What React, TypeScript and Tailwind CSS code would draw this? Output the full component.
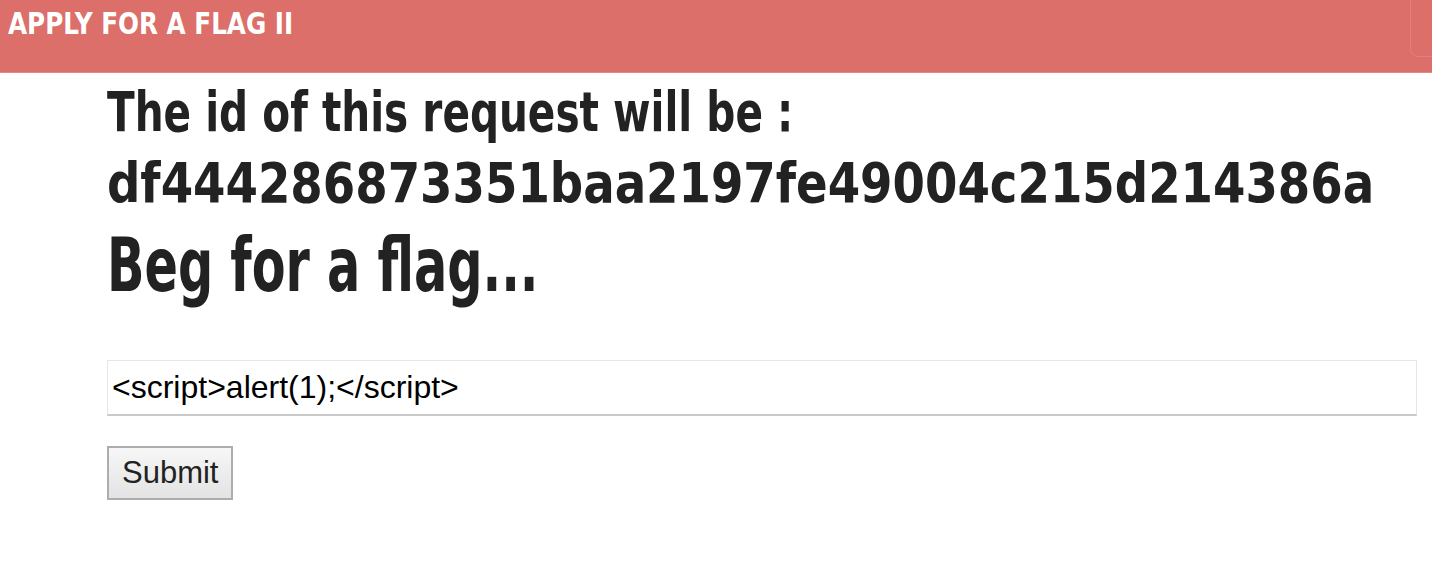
import React from "react";

// no narrow gothic face is installed, so DejaVu Sans Condensed is squeezed horizontally
const gothic = {
  fontFamily: '"DejaVu Sans Condensed", "DejaVu Sans", sans-serif',
};

const App = () => {
  return (
    <div className="min-h-[562px] w-full overflow-hidden bg-white">
      {/* Navbar */}
      <header className="relative h-[73px] overflow-hidden bg-[#dc6f69] border-b border-[#e48a84]">
        <div
          className="w-max origin-left scale-x-[0.885] pl-[9px] pt-[5px] text-[31px] font-bold leading-[36px] text-white"
          style={gothic}
        >
          APPLY FOR A FLAG II
        </div>
        <div className="absolute left-[1410px] top-[-20px] h-[77px] w-[60px] rounded-[8px] border border-[#e3827c]" />
      </header>

      {/* Content */}
      <main className="pl-[107px] pr-[15px]" style={gothic}>
        <h1 className="mt-[4px] text-[55px] font-bold leading-[71px] text-[#222]">
          <span className="block w-max origin-left scale-x-[0.82]">The id of this request will be :</span>
          <span className="block w-max origin-left scale-x-[0.942]">
            df444286873351baa2197fe49004c215d214386a
          </span>
        </h1>
        <h2 className="mt-[0px] w-max origin-left scale-x-[0.73] text-[75px] font-bold leading-[92px] text-[#222]">
          Beg for a flag...
        </h2>

        <form className="mt-[49px]" style={{ fontFamily: '"Liberation Sans", Arial, sans-serif' }}>
          <input
            type="text"
            defaultValue="<script>alert(1);</script>"
            className="block h-[56px] w-full border border-[#e6e6e6] border-b-2 border-b-[#c9c9c9] px-[4px] text-[32px] text-black outline-none"
          />
          <button
            type="button"
            className="mt-[30px] h-[54px] border-2 border-[#adadad] bg-gradient-to-b from-[#f7f7f7] to-[#e3e3e3] px-[13px] text-[31px] text-[#222]"
          >
            Submit
          </button>
        </form>
      </main>
    </div>
  );
};

export default App;
